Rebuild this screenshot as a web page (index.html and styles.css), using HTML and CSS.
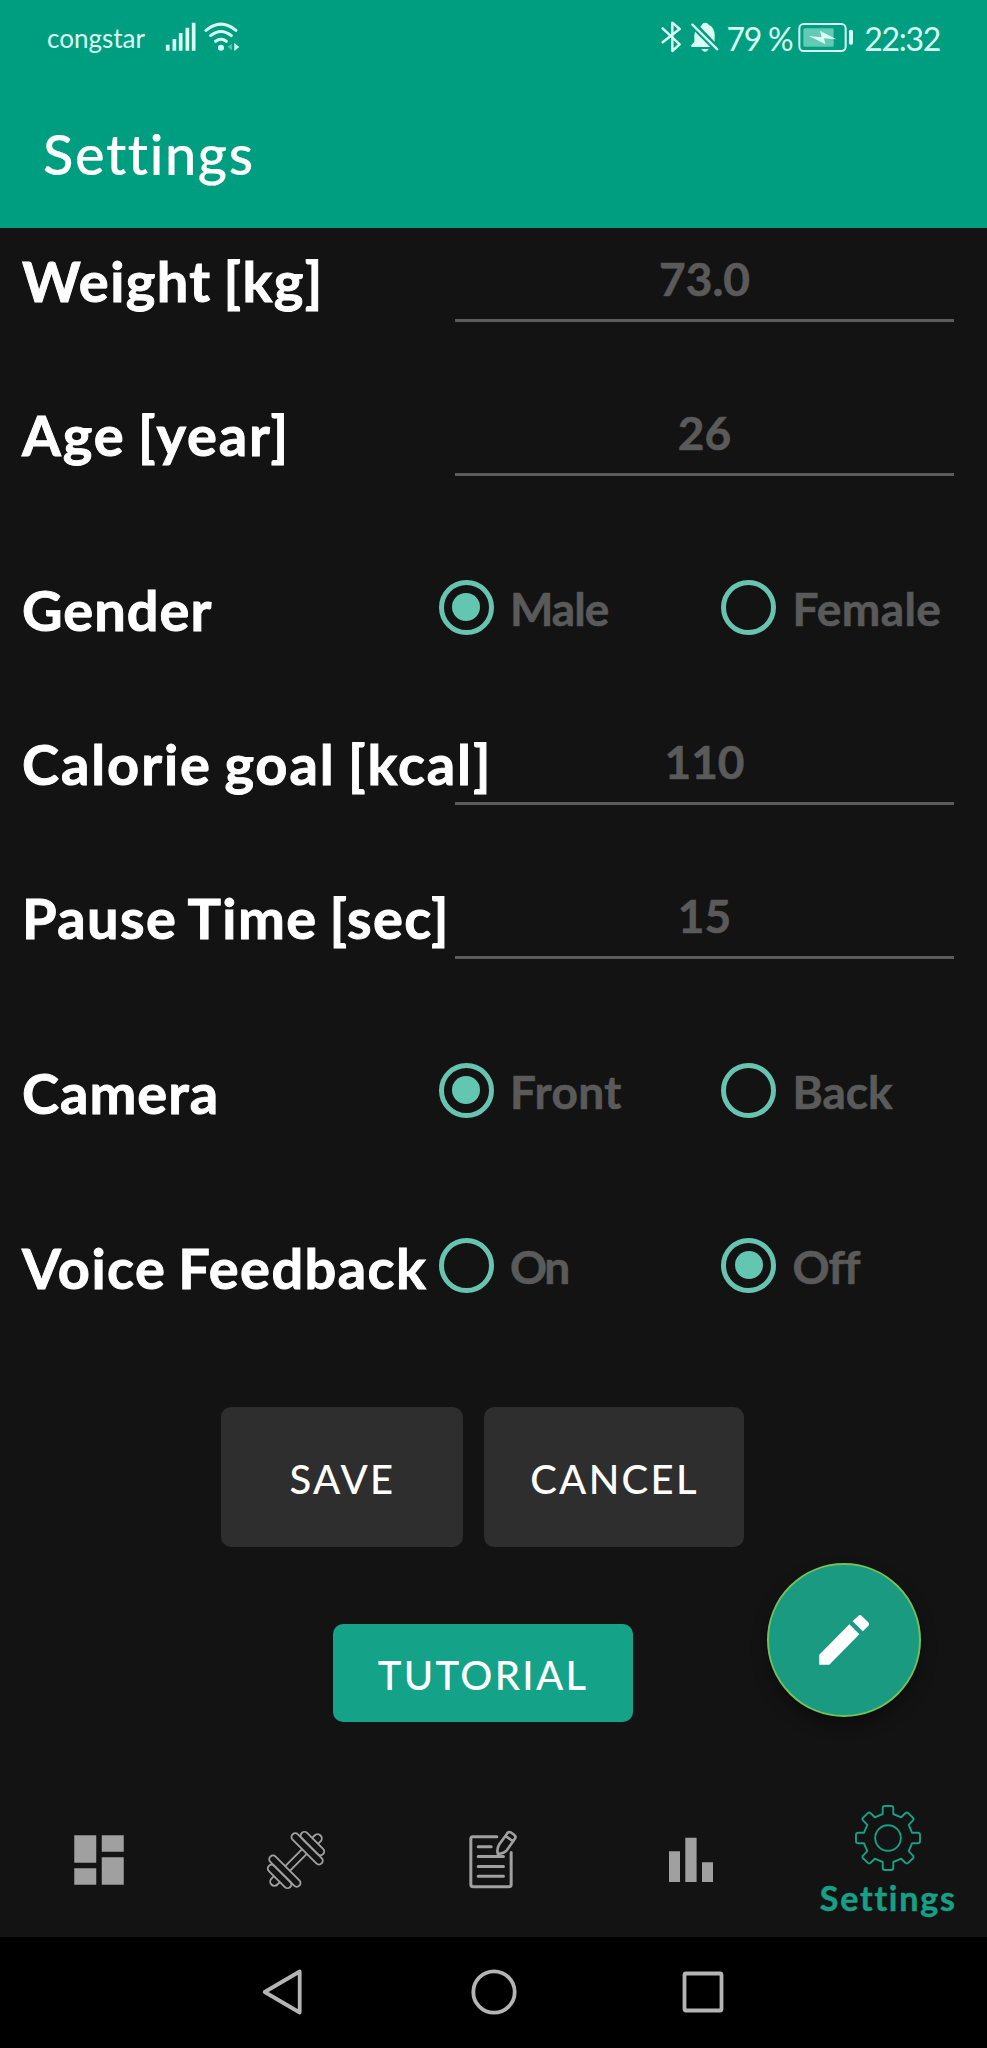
FILE: index.html
```html
<!DOCTYPE html>
<html lang="en">
<head>
<meta charset="utf-8">
<title>Settings</title>
<link rel="stylesheet" href="styles.css">
</head>
<body>
<div class="screen">
  <header class="app-header">
    <div class="status-bar">
      <span class="carrier">congstar</span>
      <svg class="signal" viewBox="490 60 240 100" width="80" height="33.3">
        <g stroke-width="11"><path d="M504 134V152M524 117V152M543 99V152M563 83V152M582 68V152"/></g>
        <g fill="none" stroke-width="9" stroke-linecap="round"><path d="M619 91Q664 54 709 91M633 107Q664 82 695 107M648 124Q664 112 680 124"/></g>
        <circle cx="664" cy="143" r="9" stroke="none"/>
        <path class="dim" d="M697 131V151L684 141Z" stroke="none"/>
        <path d="M704 129V153L719 141Z" stroke="none"/>
      </svg>
      <div class="status-right">
        <svg class="bt" viewBox="62 62 61 94" width="20.3" height="31.3"><path fill="none" stroke-width="7.5" stroke-linejoin="round" stroke-linecap="round" d="M67 84L118 132L96 152V67L118 86L67 126"/></svg>
        <svg class="bell" viewBox="150 62 87 94" width="29" height="31.3">
          <path stroke="none" d="M185 74q3-7 11-7t10 6q17 8 18 28v23L181 80zM165 94L211 140H154V134L163 125V104zM184 146h22q-4 8-11 8t-11-8z"/>
          <path fill="none" stroke-width="7" stroke-linecap="round" d="M157 73L232 147"/>
        </svg>
        <span class="percent">79 %</span>
        <svg class="battery" viewBox="474 62 168 94" width="56" height="31.3">
          <rect x="478" y="71" width="139" height="81" rx="13" fill="none" stroke-width="6"/>
          <rect class="charge" x="490" y="84" width="91" height="55" rx="4" stroke="none"/>
          <path stroke="none" d="M506 107L545 111L540 91L589 117L552 114L556 131Z"/>
          <rect x="627" y="88" width="12" height="45" rx="5" stroke="none"/>
        </svg>
        <span class="clock">22:32</span>
      </div>
    </div>
    <h1 class="title">Settings</h1>
  </header>

  <main class="form">
    <div class="row"><label class="label">Weight [kg]</label><div class="field">73.0</div></div>
    <div class="row"><label class="label label-wide">Age [year]</label><div class="field">26</div></div>
    <div class="row row-radio"><label class="label label-snug">Gender</label>
      <div class="option"><i class="radio on"></i><span class="tight">Male</span></div>
      <div class="option"><i class="radio"></i><span class="loose">Female</span></div></div>
    <div class="row"><label class="label label-wide">Calorie goal [kcal]</label><div class="field">110</div></div>
    <div class="row"><label class="label">Pause Time [sec]</label><div class="field">15</div></div>
    <div class="row row-radio"><label class="label label-snug">Camera</label>
      <div class="option"><i class="radio on"></i><span class="loose">Front</span></div>
      <div class="option"><i class="radio"></i><span>Back</span></div></div>
    <div class="row row-radio"><label class="label">Voice Feedback</label>
      <div class="option"><i class="radio"></i><span class="tighter">On</span></div>
      <div class="option"><i class="radio on"></i><span class="tight">Off</span></div></div>
    <div class="actions">
      <button class="btn btn-save">SAVE</button>
      <button class="btn btn-cancel">CANCEL</button>
    </div>
    <button class="btn btn-tutorial">TUTORIAL</button>
    <button class="fab" aria-label="Edit">
      <svg viewBox="0 0 24 24" width="66" height="66"><path d="M3 17.35V21h3.65L17.6 9.95l-3.65-3.65zM20.8 6.9a.95.95 0 0 0 0-1.35l-2.3-2.3a.95.95 0 0 0-1.35 0l-2.05 1.9 3.75 3.65z"/></svg>
    </button>
  </main>

  <nav class="tabs">
    <a class="tab"><svg viewBox="-36 -36 72 72" width="72" height="72"><path transform="scale(2.75) translate(-12 -12)" d="M3 13h8V3H3zm0 8h8v-6H3zm10 0h8V11h-8zm0-18v6h8V3z"/></svg></a>
    <a class="tab"><svg viewBox="-36 -36 72 72" width="72" height="72"><g class="line" transform="rotate(-45)" stroke-width="1.9">
      <path d="M-12-3.3H12M-12 3.3H12M27-4.2h3.5a4.2 4.2 0 0 1 0 8.4H27M-27-4.2h-3.5a4.2 4.2 0 0 0 0 8.4H-27"/>
      <rect x="12" y="-20.5" width="7.5" height="41" rx="3.7"/><rect x="19.5" y="-15" width="7.5" height="30" rx="3.7"/>
      <rect x="-19.5" y="-20.5" width="7.5" height="41" rx="3.7"/><rect x="-27" y="-15" width="7.5" height="30" rx="3.7"/>
    </g></svg></a>
    <a class="tab"><svg viewBox="-36 -36 72 72" width="72" height="72"><g class="line" transform="scale(.3333) translate(-161.5 -210.5)" stroke-width="9" stroke-linecap="round" stroke-linejoin="round">
      <path d="M173 141H101q-6 0-6 6V284q0 7 7 7H209q7 0 7-7V188M117 171H156M117 200H193M117 230H193M117 259H193"/>
      <path stroke-width="8" d="M202 134q5-11 13-6l9 6q8 6 3 13L204 180q-9 11-28 12q-4-14 4-28ZM199 138l23 17"/>
    </g></svg></a>
    <a class="tab"><svg viewBox="-36 -36 72 72" width="72" height="72"><path d="M-22-8.7h11V22h-11zM-5.7-22.3H5.6V22H-5.7zM11 2.3H22V22H11z"/></svg></a>
    <a class="tab active"><svg viewBox="-36 -36 72 72" width="72" height="72"><g class="line" stroke-width="1.9" stroke-linejoin="round">
      <path d="M-5.3-24V-29.7Q-5.3-32-3-32H3Q5.3-32 5.3-29.7V-24L13.2-20.7 17.3-24.7Q18.9-26.4 20.5-24.7L24.7-20.5Q26.4-18.9 24.7-17.3L20.7-13.2 24-5.3H29.7Q32-5.3 32-3V3Q32 5.3 29.7 5.3H24L20.7 13.2 24.7 17.3Q26.4 18.9 24.7 20.5L20.5 24.7Q18.9 26.4 17.3 24.7L13.2 20.7 5.3 24V29.7Q5.3 32 3 32H-3Q-5.3 32-5.3 29.7V24L-13.2 20.7-17.3 24.7Q-18.9 26.4-20.5 24.7L-24.7 20.5Q-26.4 18.9-24.7 17.3L-20.7 13.2-24 5.3H-29.7Q-32 5.3-32 3V-3Q-32-5.3-29.7-5.3H-24L-20.7-13.2-24.7-17.3Q-26.4-18.9-24.7-20.5L-20.5-24.7Q-18.9-26.4-17.3-24.7L-13.2-20.7Z"/>
      <circle r="12.8"/></g></svg><span>Settings</span></a>
  </nav>

  <div class="system-nav">
    <svg viewBox="-25 -25 50 50" width="50" height="50"><path stroke-linejoin="round" d="M14.7-20.5V20.5L-20.3 0Z"/></svg>
    <svg viewBox="-25 -25 50 50" width="50" height="50"><circle r="20.7"/></svg>
    <svg viewBox="-25 -25 50 50" width="50" height="50"><rect x="-18.5" y="-18.5" width="37" height="37" rx="1.5"/></svg>
  </div>
</div>
</body>
</html>
```
FILE: styles.css
```css
* { box-sizing: border-box; }
body { margin: 0; background: #131313; font-family: Lato, "Open Sans", sans-serif; font-variant-ligatures: none; }
.screen { width: 987px; height: 2048px; display: flex; flex-direction: column; position: relative; overflow: hidden; }

.app-header { height: 228px; background: #009e81; color: #fff; flex: none; }
.status-bar { height: 76px; display: flex; align-items: center; padding: 0 47px 2px 47px; color: #d9fff3; }
.status-bar svg { fill: #d9fff3; stroke: #d9fff3; flex: none; }
.carrier { font-size: 26px; width: 116px; white-space: nowrap; padding-top: 2px; }
.signal .dim { opacity: .4; }
.status-right { margin-left: auto; display: flex; align-items: center; white-space: nowrap; }
.bell { margin-left: 9px; }
.percent { font-size: 32px; margin-left: 7px; letter-spacing: -1.3px; padding-top: 2px; }
.battery { margin: 0 10px 0 6px; }
.battery .charge { opacity: .45; }
.clock { font-size: 32px; letter-spacing: -1.3px; padding-top: 2px; }
.title { margin: 0; padding-left: 43px; font-size: 56px; font-weight: 500; line-height: 156px; height: 152px; letter-spacing: 1.6px; -webkit-text-stroke: .2px #fff; }

.form { flex: none; height: 1552px; padding: 2px 0 0 22px; position: relative; }
.row { display: grid; grid-template-columns: 433px 499px; height: 100px; margin-bottom: 54px; }
.row-radio { grid-template-columns: 416.5px 282.5px 266px; margin-top: 75px; margin-bottom: 54px; }
.label { font-size: 56px; font-weight: 700; line-height: 102px; color: #fff; white-space: nowrap; letter-spacing: 1.4px; word-spacing: -3px; -webkit-text-stroke: .9px #fff; }
.label-wide { letter-spacing: 1.9px; }
.label-snug { letter-spacing: 1px; }
.field { height: 92px; padding-top: 7px; line-height: 84px; border-bottom: 3px solid #5c5c5c; text-align: center; font-size: 46px; font-weight: 700; color: #5a5a5a; -webkit-text-stroke: .6px #5a5a5a; }
.option { height: 96px; display: flex; align-items: center; gap: 16.5px; font-size: 46px; font-weight: 700; color: #5a5a5a; -webkit-text-stroke: .6px #5a5a5a; }
.option span { padding-top: 3px; }
.tight { letter-spacing: -1px; }
.tighter { letter-spacing: -2.5px; }
.loose { letter-spacing: .4px; }
.radio { width: 55px; height: 55px; border: 5.5px solid #66c4b1; border-radius: 50%; display: grid; place-items: center; }
.radio.on::after { content: ""; width: 28px; height: 28px; border-radius: 50%; background: #63c6b1; }
.btn { border: 0; border-radius: 10px; padding: 3px 0 0 1px; color: #fff; font: 500 40px Lato, sans-serif; letter-spacing: 2.3px; background: #2e2e2e; }
.actions { display: flex; gap: 21px; padding-left: 199px; margin-top: 90px; }
.actions .btn { height: 140px; }
.btn-save { width: 242px; }
.btn-cancel { width: 260px; }
.btn-tutorial { display: block; width: 300px; height: 98px; margin: 77px 0 0 310.5px; background: #14a389; }
.fab { position: absolute; left: 767px; top: 1335px; width: 154px; height: 154px; border-radius: 50%; border: 2px solid #76c05a; background: #1b9a82; padding: 0; display: grid; place-items: center; box-shadow: 0 8px 16px rgba(0,0,0,.35); }
.fab svg { fill: #fff; }

.tabs { height: 157px; flex: none; display: grid; grid-template-columns: repeat(5, 1fr); }
.tab { display: flex; flex-direction: column; align-items: center; padding-top: 44px; }
.tab svg { fill: #a0a0a0; flex: none; }
.tab .line { fill: none; stroke: #a0a0a0; }
.tab.active { padding-top: 22px; color: #16a085; font-size: 34px; font-weight: 700; line-height: 48px; letter-spacing: 1.8px; -webkit-text-stroke: .5px #16a085; }
.tab.active .line { stroke: #16a085; }

.system-nav { flex: 1; background: #000; display: flex; justify-content: center; gap: 159px; align-items: center; padding-bottom: 1px; }
.system-nav svg { fill: none; stroke: #b4b4b4; stroke-width: 3.8; }
```
